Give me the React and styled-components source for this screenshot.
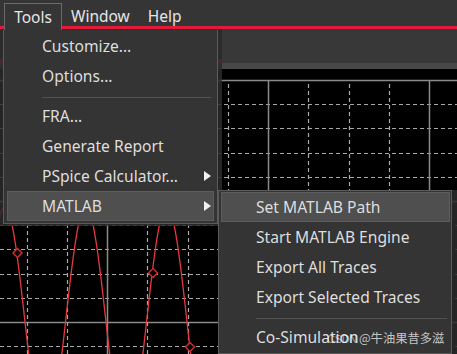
import React from "react";
import styled, { createGlobalStyle } from "styled-components";

const Global = createGlobalStyle`
  html, body { margin: 0; padding: 0; background: #000; overflow: hidden; }
  * { box-sizing: border-box; }
`;

const FONT = `"Noto Sans", "Noto Sans CJK SC", sans-serif`;
const RED = "#e31b3a";

const Screen = styled.div`
  position: relative;
  width: 457px;
  height: 354px;
  overflow: hidden;
  display: flex;
  flex-direction: column;
  background: #000;
  font-family: ${FONT};
`;

const MenuBar = styled.div`
  height: 29px;
  flex-shrink: 0;
  display: flex;
  background: #353535;
`;

const Edge = styled.div`
  width: 4px;
  border-bottom: 3px solid ${RED};
`;

const ActiveMenu = styled.div`
  position: relative;
  z-index: 4;
  width: 58px;
  height: 27px;
  margin-top: 3px;
  border: 1px solid #6a6a6a;
  border-bottom: none;
  background: #353535;
  display: flex;
  align-items: center;
  justify-content: center;
  font-size: 15.5px;
  color: #e6e6e6;
`;

const MenuRest = styled.div`
  flex: 1;
  display: flex;
  border-bottom: 3px solid ${RED};
`;

const MenuTitle = styled.div`
  padding: 5px 9px 0;
  display: flex;
  align-items: center;
  font-size: 15.5px;
  color: #e6e6e6;
`;

const Toolbar = styled.div`
  height: 34px;
  flex-shrink: 0;
  display: flex;
`;

const DocTab = styled.div`
  width: 222px;
  background: #2b2b2b;
  border-bottom: 4px solid ${RED};
`;

const ToolbarFill = styled.div`
  flex: 1;
  background: #383838;
`;

const Band = styled.div`
  height: 6px;
  flex-shrink: 0;
  background: #484848;
`;

const PlotArea = styled.div`
  flex: 1;
  background: #000;
  svg { display: block; }
`;

const Menu = styled.div`
  position: absolute;
  left: ${(p) => p.$left}px;
  top: ${(p) => p.$top}px;
  width: ${(p) => p.$width}px;
  z-index: ${(p) => p.$z};
  background: #343434;
  border: 1px solid #5b5b5b;
  padding: ${(p) => p.$pad};
  display: flex;
  flex-direction: column;
  box-shadow: 0 0 0 5px rgba(44, 44, 44, 0.85);
  clip-path: ${(p) => p.$clip};
`;

const Item = styled.div`
  height: 30px;
  flex-shrink: 0;
  display: flex;
  align-items: center;
  padding: 0 3px 0 35px;
  font-size: 15.6px;
  color: #dedede;
  white-space: nowrap;
  background: ${(p) => (p.$active ? "#4f4f4f" : "transparent")};
  box-shadow: ${(p) => (p.$active ? "inset 0 0 0 1px #5c5c5c" : "none")};
`;

const Arrow = styled.span`
  margin-left: auto;
  width: 0;
  height: 0;
  border-left: 7px solid #f0f0f0;
  border-top: 5px solid transparent;
  border-bottom: 5px solid transparent;
`;

const Sep = styled.div`
  height: 10px;
  flex-shrink: 0;
  padding: 6px 3px 0 35px;
  &::after {
    content: "";
    display: block;
    height: 1px;
    background: #525252;
  }
`;

const Watermark = styled.div`
  position: absolute;
  left: 327px;
  top: 329px;
  z-index: 6;
  font-family: "Noto Sans CJK SC", sans-serif;
  font-size: 12.3px;
  color: rgba(255, 255, 255, 0.72);
  white-space: nowrap;
  display: flex;
  align-items: baseline;
  gap: 2px;
`;

const Csdn = styled.span`
  font-family: "Liberation Sans", sans-serif;
  font-size: 11px;
  letter-spacing: -0.3px;
  color: rgba(255, 255, 255, 0.55);
`;

const OFF = 69;
const A = 115;
const P = 81;

function Plot() {
  const h = [];
  for (let k = 0; k <= 11; k++) {
    const y = 80 + 24.2 * k - OFF;
    const solid = k === 0 || k === 5 || k === 10;
    h.push(
      <line
        key={"h" + k}
        x1={0}
        x2={457}
        y1={Math.round(y) + 0.5}
        y2={Math.round(y) + 0.5}
        stroke={solid ? "#8a8a8a" : "#a9a9a9"}
        strokeWidth={solid ? 1.5 : 1.2}
        strokeDasharray={solid ? undefined : "4 3"}
      />
    );
  }
  const v = [];
  for (let k = -2; k <= 8; k++) {
    const x = Math.round(107 + 40.25 * k) + 0.5;
    const solid = k % 4 === 0;
    v.push(
      <line
        key={"v" + k}
        x1={x}
        x2={x}
        y1={solid ? 81 - OFF : 84 - OFF}
        y2={285}
        stroke={solid ? "#8a8a8a" : "#a9a9a9"}
        strokeWidth={solid ? 1.5 : 1.2}
        strokeDasharray={solid ? undefined : "4 3"}
      />
    );
  }
  const pts = [];
  for (let x = -2; x <= 460; x += 0.5) {
    const y = 322 + A * Math.sin((2 * Math.PI * (x - 25)) / P) - OFF;
    pts.push(`${x},${y.toFixed(2)}`);
  }
  const marks = [
    [17.5, 253],
    [153, 273],
    [190, 347],
  ];
  return (
    <svg width="457" height="285" viewBox="0 0 457 285">
      {h}
      {v}
      <polyline points={pts.join(" ")} fill="none" stroke="#e8383d" strokeWidth="1.3" />
      {marks.map(([x, y], i) => (
        <polygon
          key={i}
          points={`${x},${y - OFF - 4.5} ${x + 4.5},${y - OFF} ${x},${y - OFF + 4.5} ${x - 4.5},${y - OFF}`}
          fill="#000"
          stroke="#d02a2a"
          strokeWidth="1.5"
        />
      ))}
    </svg>
  );
}

export default function App() {
  return (
    <Screen>
      <Global />
      <MenuBar>
        <Edge />
        <ActiveMenu>Tools</ActiveMenu>
        <MenuRest>
          <MenuTitle>Window</MenuTitle>
          <MenuTitle>Help</MenuTitle>
        </MenuRest>
      </MenuBar>
      <Toolbar>
        <DocTab />
        <ToolbarFill />
      </Toolbar>
      <Band />
      <PlotArea>
        <Plot />
      </PlotArea>

      <Menu
        $left={3}
        $top={29}
        $width={215}
        $z={2}
        $pad="1px 3px 2px"
        $clip="inset(1px -4px -2px -3px)"
      >
        <Item>Customize...</Item>
        <Item>Options...</Item>
        <Sep />
        <Item>FRA...</Item>
        <Item>Generate Report</Item>
        <Item>
          PSpice Calculator...
          <Arrow />
        </Item>
        <Item $active>
          MATLAB
          <Arrow />
        </Item>
      </Menu>

      <Menu
        $left={218}
        $top={190}
        $width={234}
        $z={3}
        $pad="1px 1px 1px 2px"
        $clip="inset(0 -5px -5px 0)"
      >
        <Item $active>Set MATLAB Path</Item>
        <Item>Start MATLAB Engine</Item>
        <Item>Export All Traces</Item>
        <Item>Export Selected Traces</Item>
        <Sep />
        <Item>Co-Simulation</Item>
      </Menu>

      <Watermark>
        <Csdn>CSDN</Csdn>
        <span>@牛油果昔多滋</span>
      </Watermark>
    </Screen>
  );
}
